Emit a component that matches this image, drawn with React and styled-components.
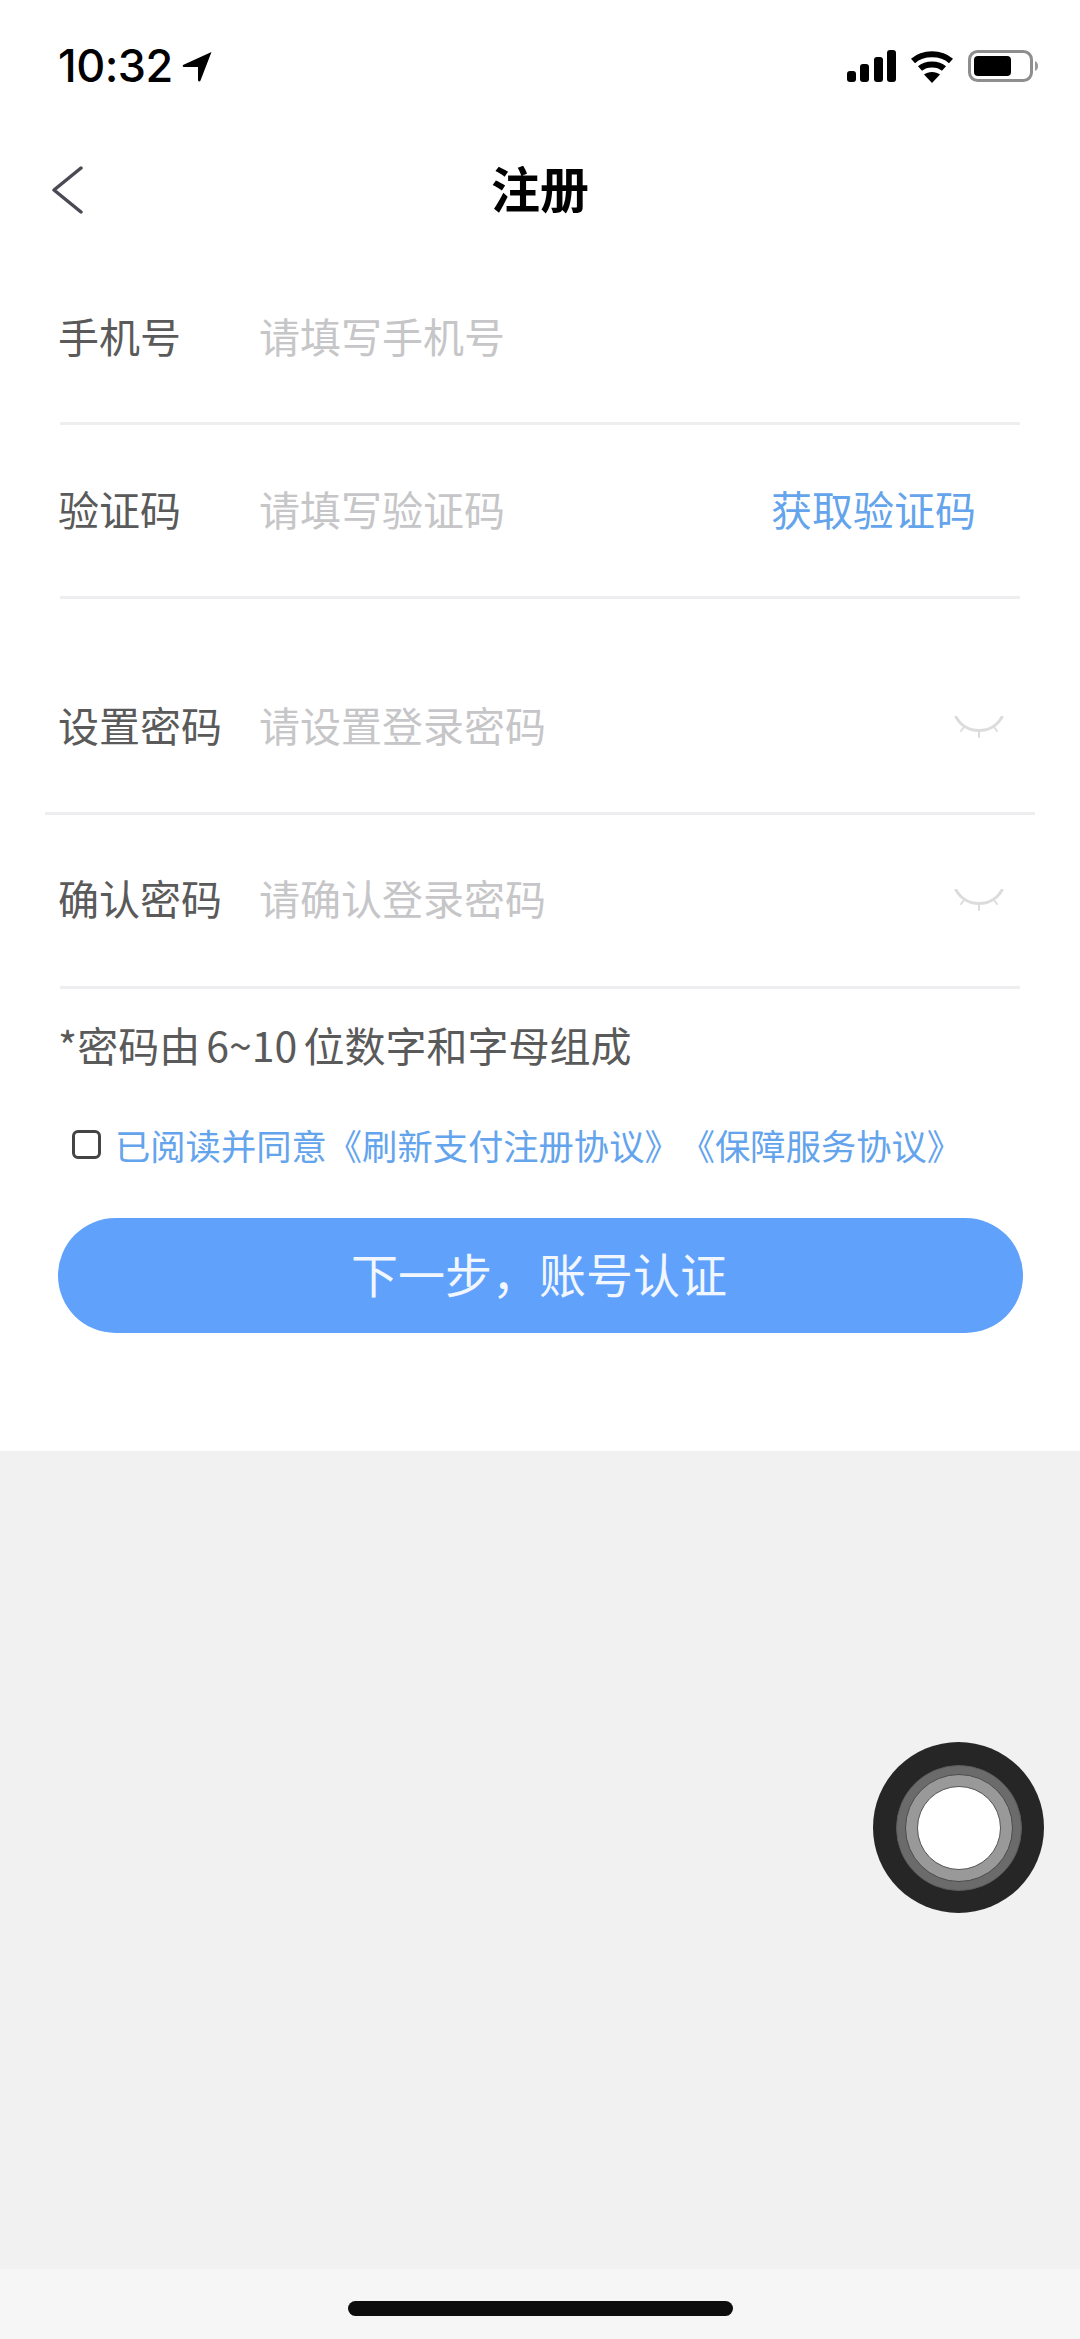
import React from 'react';
import styled, { createGlobalStyle } from 'styled-components';

const GlobalStyle = createGlobalStyle`
  html, body {
    margin: 0;
    padding: 0;
    background: #fff;
  }
  * {
    box-sizing: border-box;
  }
`;

const CJK = `"Noto Sans CJK SC", "Noto Sans", sans-serif`;

const Page = styled.div`
  position: relative;
  width: 1080px;
  height: 2339px;
  display: flex;
  flex-direction: column;
  overflow: hidden;
  font-family: ${CJK};
  background: #fff;
`;

const StatusBar = styled.div`
  height: 130px;
  padding: 50px 41px 0 58px;
  display: flex;
  justify-content: space-between;
  align-items: flex-start;
`;

const TimeBox = styled.div`
  display: flex;
  align-items: center;
  gap: 9px;
  height: 32px;
`;

const Time = styled.span`
  font-family: Inter, "Liberation Sans", sans-serif;
  font-size: 45px;
  font-weight: 500;
  letter-spacing: -0.5px;
  line-height: 32px;
  color: #000;
`;

const StatusIcons = styled.div`
  display: flex;
  align-items: center;
  gap: 14px;
  height: 32px;
`;

const NavBar = styled.div`
  position: relative;
  height: 120px;
  padding-bottom: 7px;
  display: flex;
  align-items: center;
  justify-content: center;
`;

const BackIcon = styled.svg`
  position: absolute;
  left: 51px;
  top: 36px;
`;

const Title = styled.h1`
  margin: 0;
  font-size: 49px;
  font-weight: 700;
  color: #000;
  line-height: 1;
`;

const Form = styled.div`
  display: flex;
  flex-direction: column;
  padding-top: 1px;
`;

const Row = styled.div`
  height: 174px;
  margin: 0 ${p => p.$wide ? 45 : 60}px;
  padding: 0 ${p => p.$wide ? 15 : 0}px ${p => p.$lift || 3}px;
  margin-bottom: ${p => p.$gap || 0}px;
  border-bottom: 3px solid #eeeef0;
  display: flex;
  align-items: center;
  font-size: 41px;
`;

const Label = styled.span`
  width: 201px;
  margin-left: -2px;
  color: #5a5a5a;
  flex-shrink: 0;
`;

const Placeholder = styled.span`
  flex: 1;
  color: #c6c6c8;
`;

const CodeLink = styled.span`
  color: #64a4ec;
  margin-right: 44px;
`;

const EyeIcon = styled.svg`
  margin: 8px 16px 0 0;
`;

const Note = styled.div`
  margin: 29px 58px 0;
  height: 52px;
  line-height: 52px;
  font-size: 41px;
  word-spacing: -3px;
  color: #5a5a5a;
  white-space: nowrap;
`;

const Agreement = styled.label`
  margin: 46px 0 0 72px;
  height: 56px;
  display: flex;
  align-items: center;
  font-size: 35.3px;
  text-spacing-trim: space-all;
  color: #64a4ec;
  white-space: nowrap;
`;

const Check = styled.span`
  width: 29px;
  height: 29px;
  margin-right: 14px;
  border: 3px solid #444;
  border-radius: 6px;
  flex-shrink: 0;
`;

const NextButton = styled.button`
  margin: 46px 57px 0 58px;
  height: 115px;
  padding: 0 3px 6px 0;
  border: 0;
  border-radius: 58px;
  background: #60a2fb;
  color: #f2f7ff;
  font-family: ${CJK};
  font-size: 47px;
  font-weight: 400;
`;

const Grey = styled.div`
  flex: 1;
  margin-top: 118px;
  background: #f1f1f1;
`;

const HomeArea = styled.div`
  height: 70px;
  background: #f6f6f6;
  padding-top: 32px;
  display: flex;
  justify-content: center;
`;

const HomeBar = styled.div`
  width: 385px;
  height: 15px;
  border-radius: 8px;
  background: #0d0d0d;
`;

const Assistive = styled.div`
  position: absolute;
  left: 873px;
  top: 1742px;
  width: 171px;
  height: 171px;
  border-radius: 50%;
  background: #262626;
  display: grid;
  place-items: center;
`;

const Ring = styled.div`
  width: ${p => p.$size}px;
  height: ${p => p.$size}px;
  border-radius: 50%;
  background: ${p => p.$color};
  border: 1px solid ${p => p.$line};
  display: grid;
  place-items: center;
`;

function Eye() {
  return (
    <EyeIcon width="50" height="24" viewBox="0 0 50 24" fill="none" stroke="#dcdcdc" strokeLinecap="round">
      <path d="M2 1C12 19 38 19 48 1" strokeWidth="3" />
      <path d="M10 11L7 15M25 15V21M40 11L43 15" strokeWidth="2" />
    </EyeIcon>
  );
}

export default function App() {
  return (
    <Page>
      <GlobalStyle />
      <StatusBar>
        <TimeBox>
          <Time>10:32</Time>
          <svg width="30" height="31" viewBox="0 0 30 31">
            <path d="M29.500 1L18.500 29.500C18 31 16 30.600 16 29V16H2C0.500 16 0.200 14.300 1.500 13.700Z" fill="#000" />
          </svg>
        </TimeBox>
        <StatusIcons>
          <svg width="49" height="32" viewBox="0 0 49 32" fill="#000">
            <rect x="0" y="21" width="9" height="11" rx="3" />
            <rect x="13" y="14" width="9" height="18" rx="3" />
            <rect x="27" y="7" width="9" height="25" rx="3" />
            <rect x="40" y="0" width="9" height="32" rx="3" />
          </svg>
          <svg width="44" height="33" viewBox="0 0 44 33" fill="none" stroke="#000" strokeWidth="6">
            <path d="M3 11C13 2 31 2 41 11" />
            <path d="M10 18.500C16 13 28 13 34 18.500" />
            <path d="M22 33L14 24.500C18 21 26 21 30 24.500Z" fill="#000" stroke="none" />
          </svg>
          <svg width="71" height="32" viewBox="0 0 71 32" fill="none">
            <rect x="1.500" y="1.500" width="62" height="29" rx="8" stroke="#8e8e8e" strokeWidth="3" />
            <rect x="6" y="6" width="37" height="20" rx="4" fill="#000" />
            <path d="M67 11C69.500 12 70 14 70 16C70 18 69.500 20 67 21Z" fill="#999" />
          </svg>
        </StatusIcons>
      </StatusBar>

      <NavBar>
        <BackIcon width="32" height="48" viewBox="0 0 32 48" fill="none" stroke="#4a4a55" strokeWidth="3.500" strokeLinecap="round" strokeLinejoin="round">
          <path d="M30 2L3 24L30 46" />
        </BackIcon>
        <Title>注册</Title>
      </NavBar>

      <Form>
        <Row>
          <Label>手机号</Label>
          <Placeholder>请填写手机号</Placeholder>
        </Row>
        <Row $gap={42} $lift={5}>
          <Label>验证码</Label>
          <Placeholder>请填写验证码</Placeholder>
          <CodeLink>获取验证码</CodeLink>
        </Row>
        <Row $wide $lift={5}>
          <Label>设置密码</Label>
          <Placeholder>请设置登录密码</Placeholder>
          <Eye />
        </Row>
        <Row $lift={7}>
          <Label>确认密码</Label>
          <Placeholder>请确认登录密码</Placeholder>
          <Eye />
        </Row>
      </Form>

      <Note>*密码由 6~10 位数字和字母组成</Note>
      <Agreement>
        <Check />
        已阅读并同意《刷新支付注册协议》《保障服务协议》
      </Agreement>
      <NextButton>下一步，账号认证</NextButton>

      <Grey />
      <HomeArea>
        <HomeBar />
      </HomeArea>

      <Assistive>
        <Ring $size={126} $color="#6b6b6b" $line="#5a5a5a">
          <Ring $size={108} $color="#999" $line="#4a4a4a">
            <Ring $size={84} $color="#fff" $line="#555" />
          </Ring>
        </Ring>
      </Assistive>
    </Page>
  );
}
